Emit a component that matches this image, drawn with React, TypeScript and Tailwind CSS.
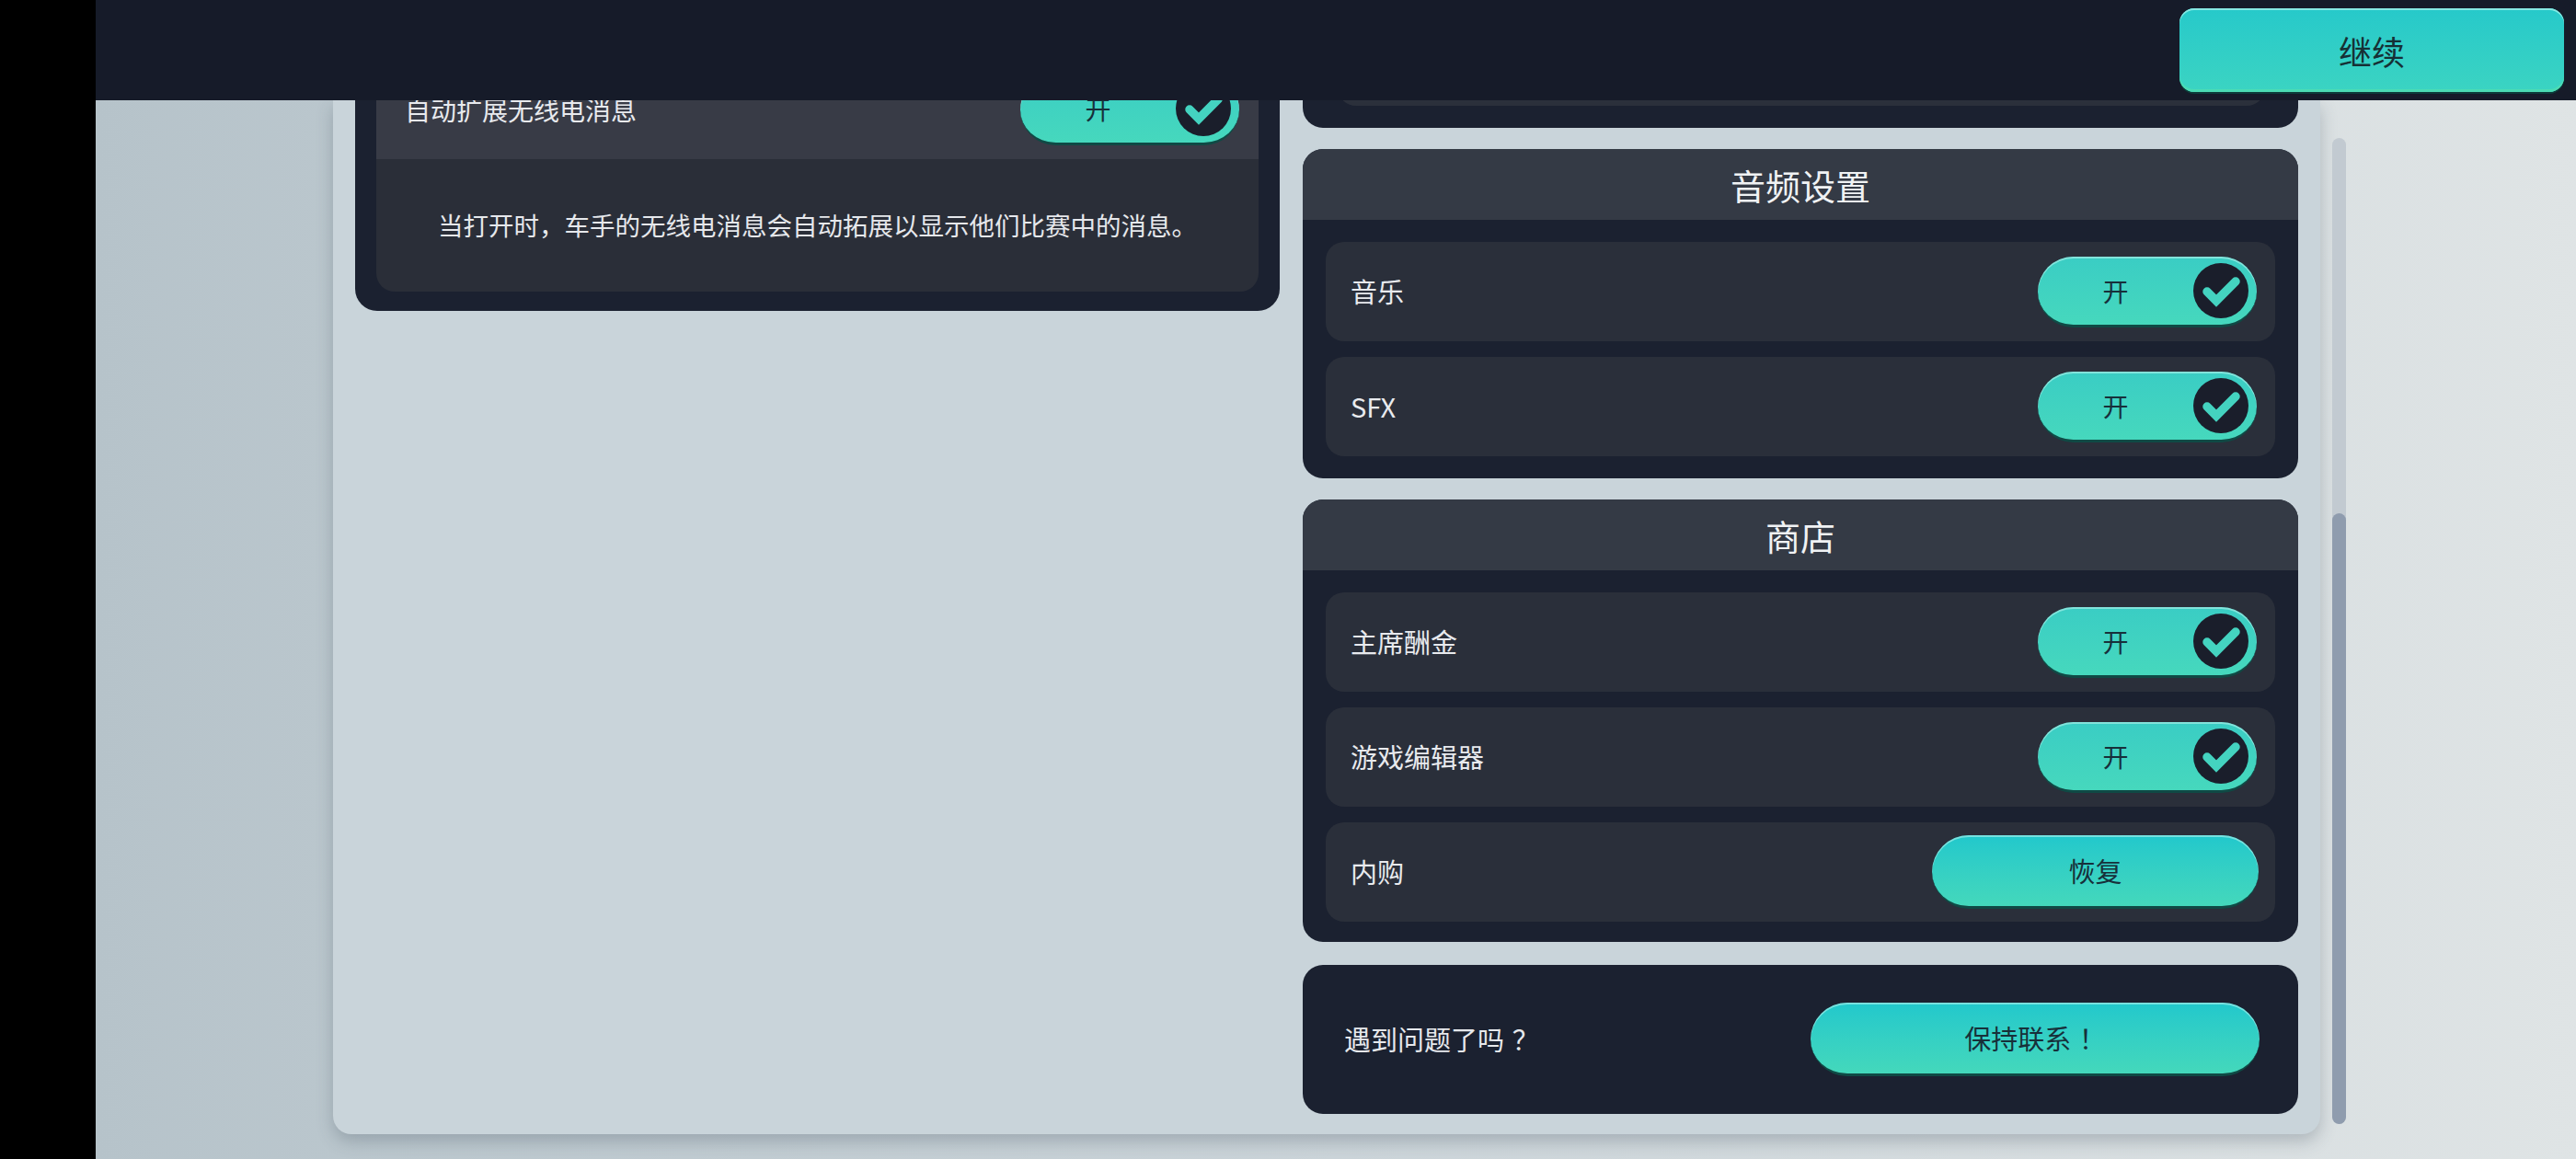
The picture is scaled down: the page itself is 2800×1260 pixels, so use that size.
import React from "react";

const FONT = { fontFamily: '"Noto Sans CJK SC", "Noto Sans", sans-serif' };

function Check() {
  return (
    <svg width="60" height="60" viewBox="0 0 60 60">
      <polyline
        points="15,31 25,41 46,20"
        fill="none"
        stroke="#44d3c0"
        strokeWidth="9.5"
        strokeLinecap="round"
        strokeLinejoin="miter"
      />
    </svg>
  );
}

function Toggle() {
  return (
    <div className="flex h-[77px] w-[238px] shrink-0 items-center rounded-full border-b-[3px] border-[#0f4a45] bg-gradient-to-b from-[#3acdc4] to-[#46d8bd] shadow-[inset_0_2px_0_rgba(190,245,238,0.55)]">
      <div className="flex-1 text-center text-[28px] leading-none text-[#17303a]">开</div>
      <div className="mr-[9px] flex h-[60px] w-[60px] items-center justify-center rounded-full bg-[#1a1e2b]">
        <Check />
      </div>
    </div>
  );
}

function PillButton({ children, w }: { children: React.ReactNode; w: string }) {
  return (
    <div
      className={`flex h-[80px] ${w} shrink-0 items-center justify-center rounded-full border-b-[3px] border-[#0f4a45] bg-gradient-to-b from-[#21c8cc] to-[#44d8bb] shadow-[inset_0_2px_0_rgba(190,245,238,0.55)]`}
    >
      <span className="text-[29px] leading-none text-[#17303a]">{children}</span>
    </div>
  );
}

function Row({ label, children }: { label: string; children: React.ReactNode }) {
  return (
    <div className="flex h-[108px] items-center justify-between rounded-[20px] bg-[#2a2f3a] pl-[27px] pr-[20px]">
      <span className="text-[29px] text-[#e8eaee]">{label}</span>
      {children}
    </div>
  );
}

function Card({ title, children, pb = "pb-[24px]" }: { title: string; children: React.ReactNode; pb?: string }) {
  return (
    <div className="overflow-hidden rounded-[22px] bg-[#1b2130]">
      <div className="flex h-[77px] items-center justify-center bg-[#343a45]">
        <span className="text-[38px] text-[#f0f2f4]">{title}</span>
      </div>
      <div className={`flex flex-col gap-[17px] pl-[25px] pr-[25px] pt-[24px] ${pb}`}>{children}</div>
    </div>
  );
}

export default function App() {
  return (
    <div className="flex h-[1260px] w-[2800px] overflow-hidden" style={FONT} lang="zh-CN">
      <div className="h-full w-[104px] shrink-0 bg-black" />
      <div className="flex h-full flex-1 flex-col bg-gradient-to-r from-[#b6c3ca] via-[#cbd4d9] to-[#dfe4e5]">
        {/* header */}
        <div className="relative z-10 flex h-[109px] shrink-0 items-start justify-end bg-[#161b29] pr-[13px] pt-[9px]">
          <div className="flex h-[91px] w-[418px] items-center justify-center rounded-[16px] bg-gradient-to-b from-[#26c9ca] to-[#3bd4c2] shadow-[inset_0_-3px_0_#4bdcb4,inset_0_2px_0_#86e8e2,0_2px_0_#0d3c3a]">
            <span className="text-[36px] leading-none text-[#163035]">继续</span>
          </div>
        </div>
        {/* body */}
        <div className="flex h-[1151px] items-start pl-[258px]">
          <div className="h-[1124px] w-[2160px] shrink-0 overflow-hidden rounded-b-[20px] bg-[#c9d4da] shadow-[0_8px_18px_rgba(60,75,90,0.28)]">
            <div className="mt-[-68px] flex items-start gap-[25px] px-[24px]">
              {/* left card */}
              <div className="w-[1005px] shrink-0 rounded-[24px] bg-[#1b2130] pb-[21px] pl-[23px] pr-[23px] pt-[24px]">
                <div className="overflow-hidden rounded-[20px]">
                  <div className="flex h-[108px] items-center justify-between bg-[#383b46] pl-[31px] pr-[21px]">
                    <span className="text-[28px] text-[#e8eaee]">自动扩展无线电消息</span>
                    <Toggle />
                  </div>
                  <div className="flex h-[144px] items-center justify-center bg-[#2a2e38]">
                    <span className="text-[27.5px] text-[#e6e8ec]">
                      当打开时，车手的无线电消息会自动拓展以显示他们比赛中的消息。
                    </span>
                  </div>
                </div>
              </div>
              {/* right column */}
              <div className="flex w-[1082px] shrink-0 flex-col gap-[23px]">
                <div className="rounded-[22px] bg-[#1b2130] pb-[24px] pl-[38px] pr-[36px] pt-[24px]">
                  <div className="h-[50px] rounded-[20px] bg-[#2b303b]" />
                </div>
                <Card title="音频设置">
                  <Row label="音乐">
                    <Toggle />
                  </Row>
                  <Row label="SFX">
                    <Toggle />
                  </Row>
                </Card>
                <Card title="商店" pb="pb-[22px]">
                  <Row label="主席酬金">
                    <Toggle />
                  </Row>
                  <Row label="游戏编辑器">
                    <Toggle />
                  </Row>
                  <div className="flex h-[108px] items-center justify-between rounded-[20px] bg-[#2a2f3a] pl-[27px] pr-[18px]">
                    <span className="text-[29px] text-[#e8eaee]">内购</span>
                    <PillButton w="w-[355px]">恢复</PillButton>
                  </div>
                </Card>
                <div className="mt-[2px] flex h-[162px] items-center justify-between rounded-[22px] bg-[#1b2130] pl-[45px] pr-[42px]">
                  <span className="text-[29px] text-[#e6e8ec]">
                    遇到问题了吗<span className="inline-block pl-[0.3em]">？</span>
                  </span>
                  <PillButton w="w-[488px]">
                    保持联系<span className="inline-block pl-[0.3em]">！</span>
                  </PillButton>
                </div>
              </div>
            </div>
          </div>
          {/* scrollbar */}
          <div className="ml-[13px] mt-[41px] flex h-[1072px] w-[15px] flex-col rounded-full bg-[#c2cad1]">
            <div className="h-[408px] shrink-0" />
            <div className="flex-1 rounded-full bg-[#8f9cae]" />
          </div>
        </div>
      </div>
    </div>
  );
}
